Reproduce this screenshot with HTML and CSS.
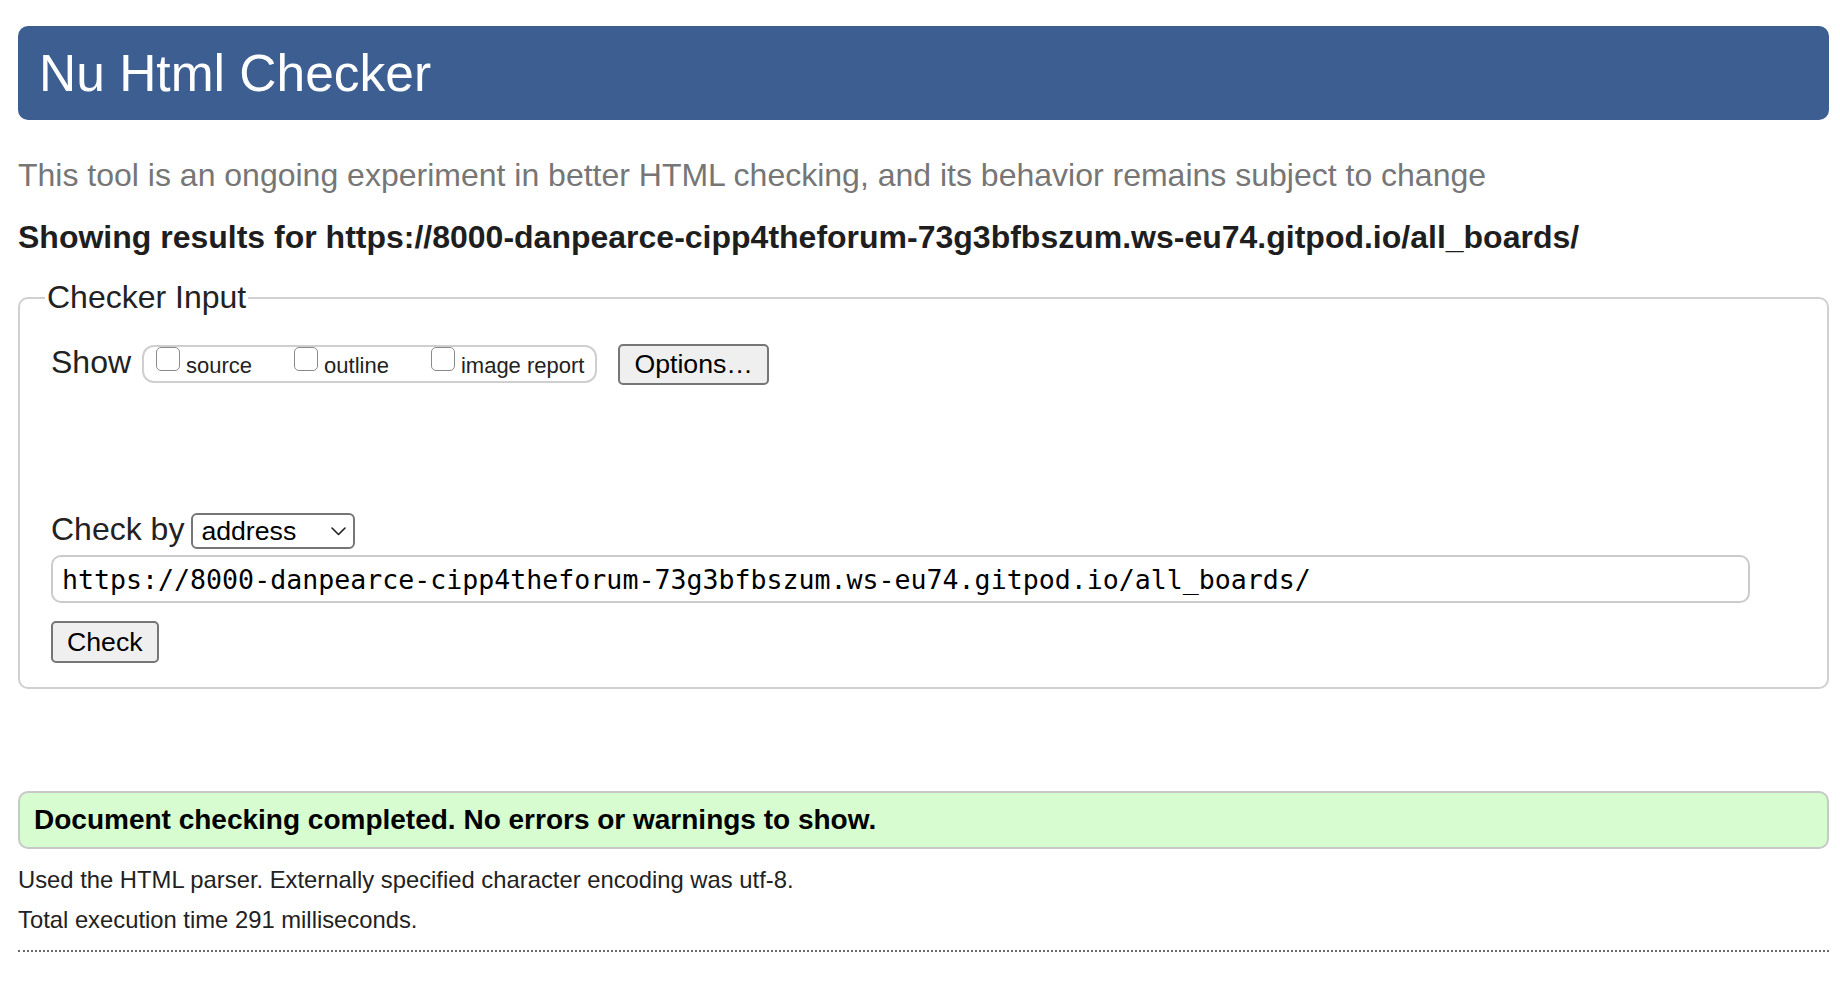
FILE: index.html
```html
<!DOCTYPE html>
<html lang="en">
<head>
<meta charset="utf-8">
<title>Showing results for https://8000-danpearce-cipp4theforum-73g3bfbszum.ws-eu74.gitpod.io/all_boards/ - Nu Html Checker</title>
<link rel="stylesheet" href="styles.css">
</head>
<body>
<h1 class="title">Nu Html Checker</h1>
<p class="intro">This tool is an ongoing experiment in better HTML checking, and its behavior remains subject to change</p>
<p class="showing">Showing results for https://8000-danpearce-cipp4theforum-73g3bfbszum.ws-eu74.gitpod.io/all_boards/</p>
<fieldset class="checker">
  <legend class="checker-legend">Checker Input</legend>
  <div class="show-row">
    <span class="show-label">Show</span>
    <span class="show-group"><label class="opt"><span class="cb"></span>source</label><label class="opt"><span class="cb"></span>outline</label><label class="opt"><span class="cb"></span>image report</label></span>
    <button class="btn btn-options" type="button">Options…</button>
  </div>
  <div class="by-row">
    <span class="by-label">Check by</span>
    <div class="select"><span class="select-text">address</span><svg class="chevron" width="15" height="9" viewBox="0 0 15 9"><polyline points="1,1 7.5,7.5 14,1" fill="none" stroke="#222" stroke-width="1.6" stroke-linecap="round" stroke-linejoin="round"/></svg></div>
  </div>
  <div class="url">https://8000-danpearce-cipp4theforum-73g3bfbszum.ws-eu74.gitpod.io/all_boards/</div>
  <button class="btn btn-check" type="button">Check</button>
</fieldset>
<div class="result">Document checking completed. No errors or warnings to show.</div>
<p class="meta">Used the HTML parser. Externally specified character encoding was utf-8.</p>
<p class="meta">Total execution time 291 milliseconds.</p>
<hr class="sep">
</body>
</html>
```

FILE: styles.css
```css
* {
  box-sizing: border-box;
}

html {
  background: #fff;
}

body {
  margin: 0;
  padding: 26px 11px 0 18px;
  font-family: "Liberation Sans", Arial, Helvetica, sans-serif;
  font-size: 32px;
  line-height: 37px;
  color: #222;
}

.title {
  margin: 0;
  height: 94px;
  padding: 17px 21px;
  background: #3d5e91;
  color: #fff;
  font-size: 51.5px;
  font-weight: normal;
  line-height: 60px;
  border-radius: 10px;
}

.intro {
  margin: 37px 0 0;
  color: #767676;
}

.showing {
  margin: 25px 0 0;
  font-weight: bold;
  color: #1e1e1e;
}

.checker {
  margin: 23px 0 0;
  padding: 28px 31px 24px;
  border: 2px solid #d0d0d0;
  border-radius: 10px;
  min-width: 0;
}

.checker-legend {
  margin-left: -6px;
  padding: 0 2px;
  font-size: 32px;
  line-height: 37px;
  color: #222;
}

.show-row {
  display: flex;
  align-items: baseline;
}

.show-label {
  margin-right: 11px;
}

.show-group {
  display: block;
  border: 2px solid #cfcfcf;
  border-radius: 12px;
  padding: 0 11px 3px 12px;
  font-size: 22px;
  line-height: 25px;
  white-space: nowrap;
  color: #222;
}

.opt {
  margin-right: 42px;
}

.opt:last-child {
  margin-right: 0;
}

.cb {
  display: inline-block;
  width: 24px;
  height: 24px;
  margin: 0 6px 2px 0;
  border: 1.5px solid #8a8a8a;
  border-radius: 5px;
  background: #fff;
  vertical-align: baseline;
}

.btn {
  font-family: "Liberation Sans", Arial, Helvetica, sans-serif;
  font-size: 26.67px;
  line-height: normal;
  color: #000;
  background: #efefef;
  border: 2px solid #767676;
  border-radius: 5px;
}

.btn-options {
  margin-left: 21px;
  height: 41px;
  padding: 0 14px;
}

.by-row {
  display: flex;
  align-items: baseline;
  margin-top: 125.5px;
}

.by-label {
  margin-right: 7px;
}

.select {
  display: flex;
  align-items: center;
  justify-content: space-between;
  width: 164px;
  height: 36px;
  padding: 0 7px 0 8px;
  border: 2px solid #767676;
  border-radius: 6px;
  background: #fff;
  font-size: 26.67px;
  line-height: normal;
  color: #000;
}

.chevron {
  display: block;
}

.url {
  display: flex;
  align-items: center;
  margin-top: 6px;
  width: calc(100% - 46px);
  height: 48px;
  padding: 0 9px;
  border: 2px solid #cbcbcb;
  border-radius: 10px;
  font-family: "DejaVu Sans Mono", "Liberation Mono", monospace;
  font-size: 26.6px;
  line-height: normal;
  color: #000;
  white-space: nowrap;
}

.btn-check {
  display: block;
  margin-top: 18px;
  height: 42px;
  padding: 0 14px;
}

.result {
  margin-top: 102px;
  padding: 11px 12px 11px 14px;
  border: 2px solid #c8c8c8;
  border-radius: 10px;
  background: #d6fcd0;
  font-size: 28px;
  line-height: 32px;
  font-weight: bold;
  color: #000;
}

.meta {
  margin: 17px 0 0;
  font-size: 23.8px;
  line-height: 28px;
  color: #222;
}

.meta + .meta {
  margin-top: 11.5px;
}

.sep {
  margin: 16.5px 0 0;
  height: 0;
  border: 0;
  border-top: 2px dotted #6a6a6a;
}
```
